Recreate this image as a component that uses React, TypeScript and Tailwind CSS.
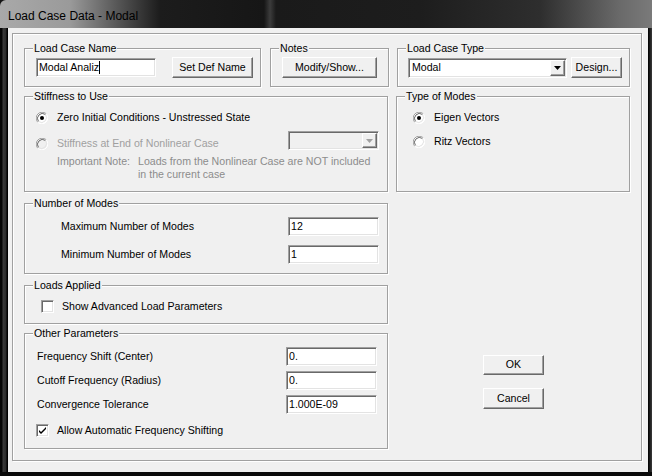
import React from "react";

const sunken =
  "border border-t-[#a0a0a0] border-l-[#a0a0a0] border-b-white border-r-white shadow-[inset_1px_1px_0_#696969,inset_-1px_-1px_0_#e3e3e3]";
const raised =
  "border border-t-white border-l-white border-b-[#696969] border-r-[#696969] shadow-[inset_-1px_-1px_0_#a0a0a0] bg-[#f0f0f0] flex items-center justify-center";

function Group({
  legend,
  className,
  children,
}: {
  legend: string;
  className: string;
  children?: React.ReactNode;
}) {
  return (
    <div
      className={`relative border border-[#a0a0a0] shadow-[inset_1px_1px_0_#fff,1px_1px_0_#fff] ${className}`}
    >
      <span className="absolute left-[8px] top-[-8px] bg-[#f0f0f0] px-[1px] leading-[14px] whitespace-nowrap">
        {legend}
      </span>
      {children}
    </div>
  );
}

function Radio({ checked, disabled }: { checked?: boolean; disabled?: boolean }) {
  return (
    <svg width="12" height="12" viewBox="0 0 12 12" className="shrink-0">
      <circle cx="6" cy="6" r="5.5" fill={disabled ? "#f0f0f0" : "#ffffff"} />
      <path d="M1.76 10.24 A6 6 0 0 1 10.24 1.76" fill="none" stroke="#a0a0a0" strokeWidth="1" />
      <path d="M2.5 9.5 A5 5 0 0 1 9.5 2.5" fill="none" stroke="#696969" strokeWidth="1" />
      <path d="M10.24 1.76 A6 6 0 0 1 1.76 10.24" fill="none" stroke="#ffffff" strokeWidth="1" />
      <path d="M9.5 2.5 A5 5 0 0 1 2.5 9.5" fill="none" stroke="#e3e3e3" strokeWidth="1" />
      {checked && <circle cx="6" cy="6" r="2" fill="#000" />}
    </svg>
  );
}

function Checkbox({ checked }: { checked?: boolean }) {
  return (
    <div className={`w-[13px] h-[13px] bg-white shrink-0 relative ${sunken}`}>
      {checked && (
        <svg width="11" height="11" viewBox="0 0 11 11" className="absolute left-0 top-0">
          <path d="M2 5 L4 7 L9 2 L9 4 L4 9 L2 7 Z" fill="#000" />
        </svg>
      )}
    </div>
  );
}

function TextBox({ value, className, caret }: { value: string; className: string; caret?: boolean }) {
  return (
    <div className={`bg-white flex items-center pl-[2px] whitespace-nowrap ${sunken} ${className}`}>
      <span>{value}</span>
      {caret && <span className="w-[1px] h-[13px] bg-black" />}
    </div>
  );
}

function Arrow({ color }: { color: string }) {
  return (
    <svg width="7" height="4" viewBox="0 0 7 4">
      <path d="M0 0 H7 L3.5 4 Z" fill={color} />
    </svg>
  );
}

export default function App() {
  return (
    <div className="w-[652px] h-[476px] overflow-hidden bg-[#141414] flex flex-col font-['Liberation_Sans',Arial,sans-serif] text-[10.6px] text-black">
      {/* title bar */}
      <div className="h-[28px] shrink-0 flex items-center pl-[8px] bg-[linear-gradient(to_right,#a9a9a9_0px,#9a9a9a_70px,#5a5a5a_115px,#1c1c1c_160px,#161616_264px,#3c3c3c_270px,#1a1a1a_276px,#1d1d1d_420px,#2e2e2e_540px,#6a6a6a_620px,#7a7a7a_652px)] rounded-tl-[6px]">
        <span className="text-[12px] text-black pt-[3px]">Load Case Data - Modal</span>
      </div>
      {/* client */}
      <div className="flex flex-1">
        <div className="w-[8px] shrink-0 bg-[linear-gradient(to_right,#050505_0px,#050505_2px,#3a3a3a_3px,#2a2a2a_6px,#000_7px)]" />
        <div className="w-[640px] h-[444px] bg-[#f0f0f0] pl-[4px] pt-[5px]">
          <div className="w-[630px] h-[428px] border border-[#a0a0a0] shadow-[inset_1px_1px_0_#fff,1px_1px_0_#fff] pl-[11px] pt-[14px] flex flex-col">
            {/* row 1 */}
            <div className="flex">
              <Group legend="Load Case Name" className="w-[237px] h-[39px] flex items-center pl-[11px]">
                <TextBox value="Modal Analiz" caret className="w-[120px] h-[19px]" />
                <div className={`ml-[16px] w-[81px] h-[21px] ${raised}`}>Set Def Name</div>
              </Group>
              <Group legend="Notes" className="ml-[9px] w-[119px] h-[39px] flex items-center pl-[11px]">
                <div className={`w-[95px] h-[21px] ${raised}`}>Modify/Show...</div>
              </Group>
              <Group legend="Load Case Type" className="ml-[8px] w-[233px] h-[39px] flex items-center pl-[10px]">
                <div className={`w-[159px] h-[20px] bg-white flex items-center ${sunken}`}>
                  <span className="pl-[3px] flex-1">Modal</span>
                  <div className={`w-[15px] h-[16px] mr-[1px] ${raised}`}>
                    <Arrow color="#000" />
                  </div>
                </div>
                <div className={`ml-[4px] w-[51px] h-[21px] ${raised}`}>Design...</div>
              </Group>
            </div>
            {/* row 2 */}
            <div className="flex mt-[9px]">
              <div className="flex flex-col w-[364px]">
                <Group legend="Stiffness to Use" className="h-[96px] pl-[11px] pt-[13px] flex flex-col">
                  <div className="flex items-center h-[16px]">
                    <Radio checked />
                    <span className="ml-[9px]">Zero Initial Conditions - Unstressed State</span>
                  </div>
                  <div className="flex items-center h-[19px] mt-[5px]">
                    <div className="flex items-center w-[252px] mt-[6px] text-[#a0a0a0]">
                      <Radio disabled />
                      <span className="ml-[9px]">Stiffness at End of Nonlinear Case</span>
                    </div>
                    <div className={`w-[91px] h-[19px] bg-[#f0f0f0] flex items-center justify-end ${sunken}`}>
                      <div className={`w-[15px] h-[15px] mr-[1px] ${raised}`}>
                        <Arrow color="#a0a0a0" />
                      </div>
                    </div>
                  </div>
                  <div className="flex mt-[5px] pl-[21px] leading-[13px] text-[#8c8c8c]">
                    <span className="w-[81px] shrink-0">Important Note:</span>
                    <span>
                      Loads from the Nonlinear Case are NOT included
                      <br />
                      in the current case
                    </span>
                  </div>
                </Group>
                <Group legend="Number of Modes" className="mt-[11px] h-[71px] pl-[36px] pt-[13px] flex flex-col">
                  <div className="flex items-center h-[19px]">
                    <span className="w-[227px]">Maximum Number of Modes</span>
                    <TextBox value="12" className="w-[91px] h-[19px]" />
                  </div>
                  <div className="flex items-center h-[19px] mt-[9px]">
                    <span className="w-[227px]">Minimum Number of Modes</span>
                    <TextBox value="1" className="w-[91px] h-[19px]" />
                  </div>
                </Group>
                <Group legend="Loads Applied" className="mt-[11px] h-[39px] pl-[16px] pt-[14px] flex">
                  <div className="flex items-center h-[13px]">
                    <Checkbox />
                    <span className="ml-[8px]">Show Advanced Load Parameters</span>
                  </div>
                </Group>
                <Group legend="Other Parameters" className="mt-[9px] h-[116px] pl-[11px] pt-[13px] flex flex-col">
                  <div className="flex items-center h-[19px]">
                    <span className="w-[250px] pl-[1px]">Frequency Shift (Center)</span>
                    <TextBox value="0." className="w-[91px] h-[19px]" />
                  </div>
                  <div className="flex items-center h-[19px] mt-[5px]">
                    <span className="w-[250px] pl-[1px]">Cutoff Frequency (Radius)</span>
                    <TextBox value="0." className="w-[91px] h-[19px]" />
                  </div>
                  <div className="flex items-center h-[19px] mt-[5px]">
                    <span className="w-[250px] pl-[1px]">Convergence Tolerance</span>
                    <TextBox value="1.000E-09" className="w-[91px] h-[19px]" />
                  </div>
                  <div className="flex items-center h-[13px] mt-[10px]">
                    <Checkbox checked />
                    <span className="ml-[8px]">Allow Automatic Frequency Shifting</span>
                  </div>
                </Group>
              </div>
              <div className="flex flex-col ml-[8px] w-[234px]">
                <Group legend="Type of Modes" className="h-[96px] pl-[16px] pt-[13px] flex flex-col">
                  <div className="flex items-center h-[16px]">
                    <Radio checked />
                    <span className="ml-[9px]">Eigen Vectors</span>
                  </div>
                  <div className="flex items-center h-[16px] mt-[8px]">
                    <Radio />
                    <span className="ml-[9px]">Ritz Vectors</span>
                  </div>
                </Group>
                <div className={`ml-[87px] mt-[163px] w-[61px] h-[20px] ${raised}`}>OK</div>
                <div className={`ml-[87px] mt-[13px] w-[61px] h-[21px] ${raised}`}>Cancel</div>
              </div>
            </div>
          </div>
        </div>
        <div className="flex-1 bg-[linear-gradient(to_right,#000,#3a3a3a)]" />
      </div>
      <div className="h-[4px] shrink-0 bg-[#0a0a0a]" />
    </div>
  );
}
